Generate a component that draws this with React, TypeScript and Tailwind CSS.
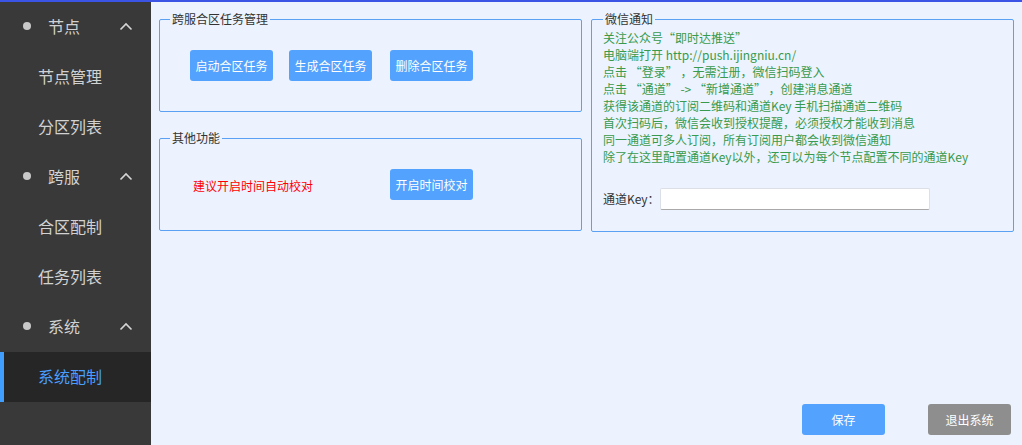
import React from "react";

const font = { fontFamily: '"Noto Sans CJK SC", "Noto Sans", sans-serif' };

function Chevron() {
  return (
    <svg width="14" height="9" viewBox="0 0 14 9" fill="none">
      <path d="M1.5 7.5 L7 2 L12.5 7.5" stroke="#d6d6d6" strokeWidth="1.6" />
    </svg>
  );
}

function Group({ title }: { title: string }) {
  return (
    <div className="flex h-[50px] items-center pb-[2px] text-[16px] text-[#d2d2d2]">
      <span className="ml-[23px] h-[8px] w-[8px] rounded-full bg-[#c9c9c9]" />
      <span className="ml-[17px] flex-1">{title}</span>
      <span className="mr-[18px] flex items-center">
        <Chevron />
      </span>
    </div>
  );
}

function Item({ title, active }: { title: string; active?: boolean }) {
  return (
    <div
      className={
        active
          ? "flex h-[50px] items-center border-l-[4px] border-[#409eff] bg-[#262626] pb-[2px] pl-[34px] text-[16px] text-[#4a9eff]"
          : "flex h-[50px] items-center pb-[2px] pl-[38px] text-[16px] text-[#d2d2d2]"
      }
    >
      {title}
    </div>
  );
}

function Btn({ children, gray }: { children: React.ReactNode; gray?: boolean }) {
  return (
    <button
      className={
        "flex h-[31px] w-[83px] items-center justify-center rounded-[3px] text-[12px] text-white " +
        (gray ? "bg-[#8e8e8e]" : "bg-[#53a2fd]")
      }
    >
      {children}
    </button>
  );
}

export default function App() {
  const lines = [
    "关注公众号“即时达推送”",
    "电脑端打开 http://push.ijingniu.cn/",
    "点击 “登录” ，无需注册，微信扫码登入",
    "点击 “通道” -> “新增通道” ，创建消息通道",
    "获得该通道的订阅二维码和通道Key 手机扫描通道二维码",
    "首次扫码后，微信会收到授权提醒，必须授权才能收到消息",
    "同一通道可多人订阅，所有订阅用户都会收到微信通知",
    "除了在这里配置通道Key以外，还可以为每个节点配置不同的通道Key",
  ];
  return (
    <div style={font} className="flex h-[445px] w-[1022px] flex-col overflow-hidden">
      <div className="h-[2px] w-full bg-[#3b54e6]" />
      <div className="flex flex-1">
        <div className="flex w-[151px] flex-col bg-[#393939]">
          <Group title="节点" />
          <Item title="节点管理" />
          <Item title="分区列表" />
          <Group title="跨服" />
          <Item title="合区配制" />
          <Item title="任务列表" />
          <Group title="系统" />
          <Item title="系统配制" active />
        </div>
        <div className="flex flex-1 flex-col bg-[#ecf3fe] px-[8px] pt-[8px]">
          <div className="flex gap-[9px]">
            <div className="flex w-[423px] flex-col gap-[17px]">
              <fieldset className="h-[102px] rounded-[2px] border border-[#5aa0f3] px-[10px]">
                <legend className="px-[2px] text-[12px] leading-[18px] text-[#333]">跨服合区任务管理</legend>
                <div className="mt-[22px] flex pl-[20px]">
                  <Btn>启动合区任务</Btn>
                  <div className="w-[16px]" />
                  <Btn>生成合区任务</Btn>
                  <div className="w-[18px]" />
                  <Btn>删除合区任务</Btn>
                </div>
              </fieldset>
              <fieldset className="h-[102px] rounded-[2px] border border-[#5aa0f3] px-[10px]">
                <legend className="px-[2px] text-[12px] leading-[18px] text-[#333]">其他功能</legend>
                <div className="mt-[22px] flex items-center">
                  <span className="ml-[23px] w-[197px] pt-[3px] text-[12px] text-[#ff0000]">建议开启时间自动校对</span>
                  <Btn>开启时间校对</Btn>
                </div>
              </fieldset>
            </div>
            <fieldset className="h-[222px] w-[423px] rounded-[2px] border border-[#5aa0f3] px-[11px]">
              <legend className="px-[2px] text-[12px] leading-[18px] text-[#333]">微信通知</legend>
              <div className="mt-[1px] flex flex-col text-[12px] leading-[17px] text-[#389a4c]">
                {lines.map((l) => (
                  <div key={l} className="whitespace-pre">{l}</div>
                ))}
              </div>
              <div className="mt-[23px] flex items-center">
                <span className="w-[57px] text-[12px] text-[#333]">通道Key：</span>
                <input className="h-[22px] w-[270px] rounded-[2px] border border-[#dcdfe6] border-b-[#a9a9a9] bg-white outline-none" />
              </div>
            </fieldset>
          </div>
          <div className="flex-1" />
          <div className="flex justify-end gap-[43px] pb-[10px] pr-[3px]">
            <Btn>保存</Btn>
            <Btn gray>退出系统</Btn>
          </div>
        </div>
      </div>
    </div>
  );
}
